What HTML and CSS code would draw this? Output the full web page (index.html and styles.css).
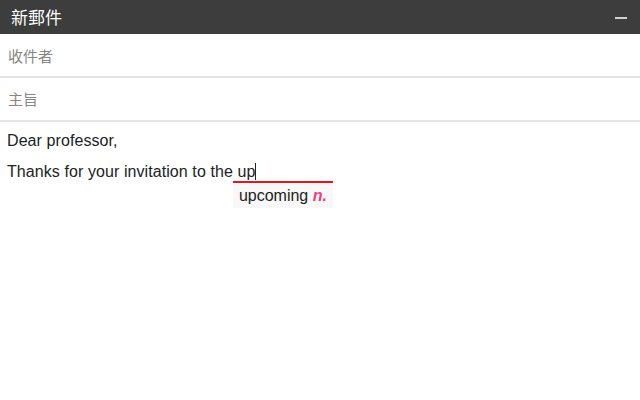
FILE: index.html
```html
<!DOCTYPE html>
<html>
<head>
<meta charset="utf-8">
<link rel="stylesheet" href="styles.css">
</head>
<body>
<div class="compose">
  <div class="header">
    <span class="title">新郵件</span>
    <span class="minimize"></span>
  </div>
  <div class="field">收件者</div>
  <div class="field second-field">主旨</div>
  <div class="body">
    <div class="line">Dear professor,</div>
    <div class="line second">Thanks for your invitation to the<span class="word"> up<span class="caret"></span><span class="suggest">upcoming <b>n.</b></span></span></div>
  </div>
</div>
</body>
</html>
```
FILE: styles.css
```css
html, body {
  margin: 0;
  padding: 0;
  background: #fff;
}
.compose {
  width: 640px;
  height: 400px;
  font-family: "Liberation Sans", Arial, "Noto Sans CJK TC", sans-serif;
}
.header {
  height: 34px;
  background: #3d3d3d;
  display: flex;
  align-items: center;
  justify-content: space-between;
  padding: 0 13px 0 11px;
  box-sizing: border-box;
}
.title {
  color: #fff;
  font-size: 17px;
  font-family: "Noto Sans CJK TC", sans-serif;
  line-height: 20px;
}
.minimize {
  width: 12px;
  height: 2px;
  background: #d0d0d0;
  margin-top: 2px;
}
.field {
  height: 42px;
  border-bottom: 2px solid #e4e4e4;
  display: flex;
  align-items: center;
  padding-left: 8px;
  font-family: "Noto Sans CJK TC", sans-serif;
  font-size: 15px;
  color: #8a8580;
}
.second-field {
  padding-bottom: 2px;
  height: 40px;
}
.body {
  padding: 9px 7px 0 7px;
  font-size: 16px;
  color: #222;
  letter-spacing: 0.08px;
}
.line {
  line-height: 20px;
  height: 20px;
}
.second {
  margin-top: 11px;
}
.word {
  position: relative;
  white-space: pre;
}
.caret {
  display: inline-block;
  width: 1px;
  height: 17px;
  background: #222;
  vertical-align: -3px;
}
.suggest {
  position: absolute;
  left: 0;
  top: 18px;
  width: 100px;
  box-sizing: border-box;
  border-top: 2px solid #e8141c;
  padding: 3px 0 0 6px;
  height: 27px;
  background: #f8f8f8;
  color: #222;
  line-height: 20px;
  font-size: 16px;
  letter-spacing: 0;
  white-space: nowrap;
}
.suggest b {
  color: #ee3f78;
  font-style: italic;
}
```
